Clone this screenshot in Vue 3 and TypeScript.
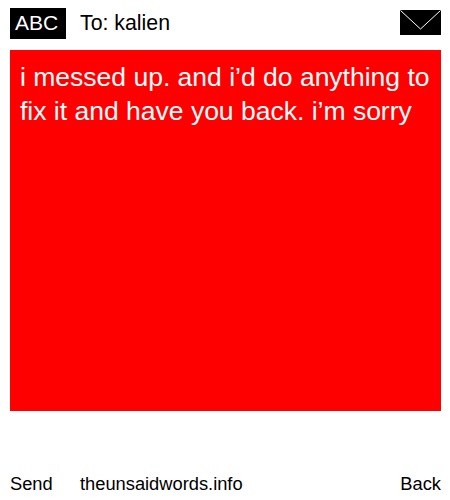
<script setup lang="ts">
const message: string = "i messed up. and i’d do anything to fix it and have you back. i’m sorry"
</script>

<template>
  <div class="page">
    <header class="top">
      <span class="abc">ABC</span>
      <span class="to">To: kalien</span>
      <svg class="env" width="41" height="25" viewBox="0 0 41 25" aria-hidden="true">
        <rect width="41" height="25" fill="#000" />
        <path d="M0.5 0.5 L20.5 19 L40.5 0.5" fill="none" stroke="#fff" stroke-width="1" />
      </svg>
    </header>
    <main class="card">{{ message }}</main>
    <footer class="bottom">
      <span class="send">Send</span>
      <span class="site">theunsaidwords.info</span>
      <span class="back">Back</span>
    </footer>
  </div>
</template>

<style>
html, body { margin: 0; background: #fff; }
</style>

<style scoped>
.page {
  width: 450px;
  height: 500px;
  box-sizing: border-box;
  padding: 8px 9px 0 10px;
  display: flex;
  flex-direction: column;
  font-family: "Liberation Sans", Arial, sans-serif;
  color: #000;
  font-size: 18.3px;
}
.top {
  display: flex;
  align-items: center;
  height: 31px;
  margin-bottom: 11px;
}
.abc {
  width: 56px;
  height: 31px;
  box-sizing: border-box;
  background: #000;
  color: #fff;
  font-size: 21px;
  display: flex;
  align-items: center;
  padding: 0 0 1px 5px;
  margin-right: 14px;
}
.to { flex: 1; font-size: 21.3px; padding-bottom: 0; }
.env { display: block; align-self: flex-start; margin-top: 2px; }
.card {
  height: 361px;
  background: #f00;
  color: #fff;
  font-size: 26.5px;
  line-height: 34px;
  padding: 10px;
  box-sizing: border-box;
}
.bottom {
  display: flex;
  align-items: center;
  margin-top: 62px;
}
.send { width: 70px; }
.site { flex: 1; }
</style>
